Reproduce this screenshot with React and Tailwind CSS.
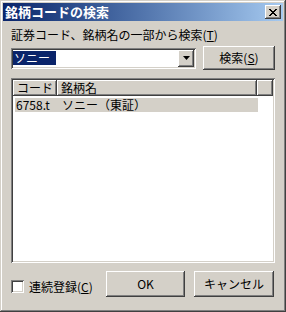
const raised =
  'shadow-[inset_-1px_-1px_#404040,inset_1px_1px_#ffffff,inset_-2px_-2px_#808080,inset_2px_2px_#d4d0c8]';
const sunken =
  'shadow-[inset_1px_1px_#808080,inset_-1px_-1px_#ffffff,inset_2px_2px_#404040,inset_-2px_-2px_#d4d0c8]';
const headerCell =
  'shadow-[inset_-1px_-1px_#404040,inset_1px_1px_#ffffff,inset_-2px_-2px_#808080]';

const App = () => {
  return (
    <div
      className="w-[286px] h-[312px] bg-[#d4d0c8] p-[3px] flex flex-col text-black text-[12px] shadow-[inset_-1px_-1px_#404040,inset_1px_1px_#d4d0c8,inset_-2px_-2px_#808080,inset_2px_2px_#ffffff]"
      style={{ fontFamily: '"Noto Sans CJK JP", "Liberation Sans", sans-serif' }}
    >
      {/* title bar */}
      <div className="h-[18px] flex items-center justify-between pl-[2px] pr-[2px] bg-linear-to-r from-[#0a246a] to-[#a6caf0]">
        <span className="text-white font-bold text-[13px] leading-[18px]">銘柄コードの検索</span>
        <button className={`w-[16px] h-[14px] bg-[#d4d0c8] flex items-center justify-center ${raised}`}>
          <svg width="8" height="7" viewBox="0 0 8 7">
            <path d="M0 0h2v1h1v1h2V1h1V0h2v1H7v1H6v1H5v1h1v1h1v1h1v1H6V6H5V5H3v1H2v1H0V6h1V5h1V4h1V3H2V2H1V1H0z" fill="#000" />
          </svg>
        </button>
      </div>

      <div className="flex-1 flex flex-col px-[8px]">
        <div className="mt-[7px] h-[14px] leading-[14px]">
          証券コード、銘柄名の一部から検索(<u>T</u>)
        </div>

        <div className="mt-[4px] h-[24px] flex items-center">
          <div className={`w-[185px] h-[21px] bg-white p-[2px] flex items-center ${sunken}`}>
            <div className="flex-1 flex items-center">
              <span className="bg-[#0a246a] text-white leading-[14px] px-[1px] pr-[6px]">ソニー</span>
            </div>
            <div className={`w-[16px] h-[17px] bg-[#d4d0c8] flex items-center justify-center ${raised}`}>
              <svg width="7" height="4" viewBox="0 0 7 4">
                <path d="M0 0h7L3.5 4z" fill="#000" />
              </svg>
            </div>
          </div>
          <button className={`ml-[7px] w-[72px] h-[24px] bg-[#d4d0c8] flex items-center justify-center leading-[14px] ${raised}`}>
            検索(<u>S</u>)
          </button>
        </div>

        <div className={`mt-[8px] h-[185px] bg-white p-[2px] flex flex-col ${sunken}`}>
          <div className="h-[16px] flex bg-[#d4d0c8] leading-[14px]">
            <div className={`w-[44px] pl-[4px] flex items-center ${headerCell}`}>コード</div>
            <div className={`w-[200px] pl-[4px] flex items-center ${headerCell}`}>銘柄名</div>
            <div className={`flex-1 ${headerCell}`}></div>
          </div>
          <div className="mt-[2px] ml-[2px] w-[243px] h-[14px] flex items-center bg-[#d4d0c8] leading-[14px]">
            <div className="w-[47px] pl-[1px]">6758.t</div>
            <div>ソニー（東証）</div>
          </div>
        </div>

        <div className="mt-[8px] h-[26px] flex">
          <label className="w-[95px] flex items-end pb-[4px]">
            <span className={`w-[13px] h-[13px] bg-white ${sunken}`}></span>
            <span className="ml-[5px] leading-[13px]">
              連続登録(<u>C</u>)
            </span>
          </label>
          <button className={`w-[79px] h-[26px] bg-[#d4d0c8] flex items-center justify-center ${raised}`}>
            OK
          </button>
          <button className={`ml-[9px] w-[80px] h-[26px] bg-[#d4d0c8] flex items-center justify-center ${raised}`}>
            キャンセル
          </button>
        </div>
      </div>
    </div>
  );
};

export default App;
